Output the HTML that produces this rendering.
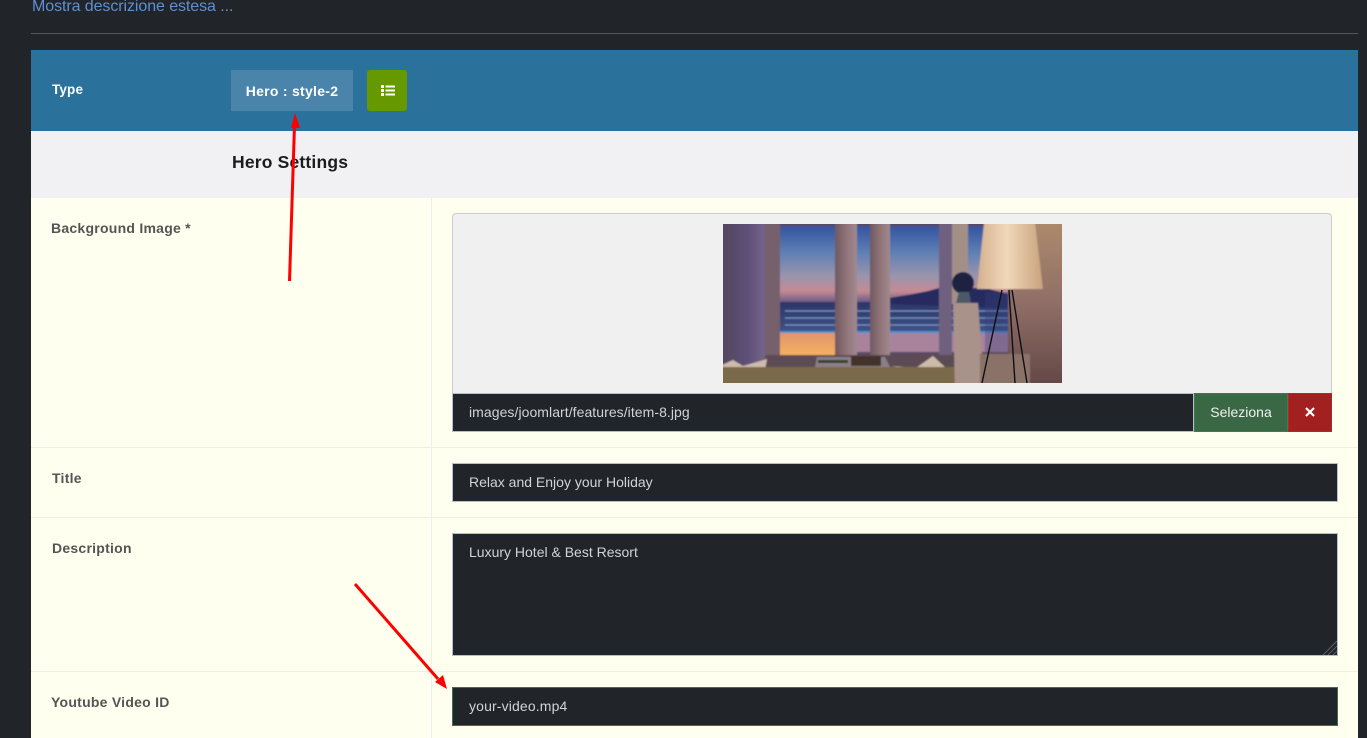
<!DOCTYPE html>
<html lang="it">
<head>
<meta charset="utf-8">
<title>Hero Settings</title>
<style>
html,body{margin:0;padding:0;width:1367px;height:738px;overflow:hidden;background:#212529;font-family:"Liberation Sans",sans-serif;font-size:14px}
.a{position:absolute;box-sizing:border-box;white-space:nowrap}
.lbl{font-weight:bold;color:#555;font-size:14px;line-height:20px;letter-spacing:.25px}
.inp{background:#212529;border:1px solid #b4bfd0;color:#ced4da;padding-left:16px;line-height:36px;font-size:14px}
</style>
</head>
<body>
<div class="a" style="left:32px;top:-3px;color:#5f8fd2;font-size:16px;line-height:20px;letter-spacing:-.08px">Mostra descrizione estesa ...</div>
<div class="a" style="left:31px;top:33px;width:1327px;height:1px;background:#54575b"></div>

<div class="a" style="left:31px;top:50px;width:1327px;height:81px;background:#2a729b"></div>
<div class="a" style="left:52px;top:80px;color:#fff;font-weight:bold;font-size:13.500px;line-height:20px;letter-spacing:.15px">Type</div>
<div class="a" style="left:231px;top:70px;width:122px;height:41px;background:#4a84ab;color:#fff;font-weight:bold;font-size:14px;line-height:43px;text-align:center;letter-spacing:.28px">Hero : style-2</div>
<div class="a" style="left:367px;top:70px;width:40px;height:41px;background:#669900;border-radius:3px"></div>
<svg class="a" style="left:381px;top:85px" width="15" height="11" viewBox="0 0 15 11"><g fill="#fff"><rect x="0" y="0" width="3" height="3"/><rect x="0" y="4" width="3" height="3"/><rect x="0" y="8" width="3" height="3"/><rect x="4.500" y=".5" width="9.500" height="2"/><rect x="4.500" y="4.500" width="9.500" height="2"/><rect x="4.500" y="8.500" width="9.500" height="2"/></g></svg>

<div class="a" style="left:31px;top:131px;width:1327px;height:67px;background:#f1f1f3"></div>
<div class="a" style="left:232px;top:151px;color:#1c1c1c;font-weight:bold;font-size:17.500px;line-height:22px;letter-spacing:.18px">Hero Settings</div>

<div class="a" style="left:31px;top:198px;width:1327px;height:540px;background:#fffff0"></div>
<div class="a" style="left:431px;top:198px;width:1px;height:540px;background:#efefe9"></div>
<div class="a" style="left:31px;top:447px;width:1327px;height:1px;background:#efefe9"></div>
<div class="a" style="left:31px;top:517px;width:1327px;height:1px;background:#efefe9"></div>
<div class="a" style="left:31px;top:671px;width:1327px;height:1px;background:#efefe9"></div>

<div class="a lbl" style="left:51px;top:218px">Background Image *</div>
<div class="a lbl" style="left:52px;top:468px">Title</div>
<div class="a lbl" style="left:52px;top:538px">Description</div>
<div class="a lbl" style="left:51px;top:692px">Youtube Video ID</div>

<div class="a" style="left:452px;top:213px;width:880px;height:181px;background:#f0f0f0;border:1px solid #ccc;border-bottom:0;border-radius:4px 4px 0 0"></div>

<svg class="a" style="left:723px;top:224px" width="339" height="159" viewBox="0 0 339 159">
<defs>
<filter id="soft" filterUnits="userSpaceOnUse" x="-10" y="-10" width="359" height="179"><feGaussianBlur stdDeviation=".7"/></filter>
<clipPath id="c"><rect width="339" height="159"/></clipPath>
<linearGradient id="sky" x1="0" y1="0" x2="0" y2="1"><stop offset="0" stop-color="#33549f"/><stop offset=".35" stop-color="#5f7fb4"/><stop offset=".66" stop-color="#9a94ac"/><stop offset=".86" stop-color="#c58a92"/><stop offset="1" stop-color="#6a5a88"/></linearGradient>
<linearGradient id="sea" x1="0" y1="0" x2="0" y2="1"><stop offset="0" stop-color="#2c3468"/><stop offset="1" stop-color="#3f5488"/></linearGradient>
<linearGradient id="wall" x1="0" y1="0" x2="1" y2="0"><stop offset="0" stop-color="#4f4158"/><stop offset=".7" stop-color="#5f5178"/><stop offset="1" stop-color="#75648a"/></linearGradient>
<linearGradient id="wallr" x1="0" y1="0" x2="0" y2="1"><stop offset="0" stop-color="#b08c6c"/><stop offset=".5" stop-color="#8f6e66"/><stop offset="1" stop-color="#5f4444"/></linearGradient>
<linearGradient id="shade" x1="0" y1="0" x2="1" y2="0"><stop offset="0" stop-color="#d4b08e"/><stop offset=".45" stop-color="#f0d8b8"/><stop offset="1" stop-color="#c9a27e"/></linearGradient>
<linearGradient id="glow" x1="0" y1="0" x2="0" y2="1"><stop offset="0" stop-color="#e0946c"/><stop offset="1" stop-color="#f6b060"/></linearGradient>
<linearGradient id="mul" x1="0" y1="0" x2="1" y2="0"><stop offset="0" stop-color="#6f5860"/><stop offset=".5" stop-color="#8f7378"/><stop offset="1" stop-color="#a08a8e"/></linearGradient>
</defs>
<g clip-path="url(#c)"><g filter="url(#soft)">
<rect x="-10" y="-10" width="359" height="179" fill="#5a4a62"/>
<rect x="-10" y="-10" width="52" height="155" fill="url(#wall)"/>
<rect x="42" y="-10" width="15" height="155" fill="#75606c"/>
<rect x="57" y="2" width="230" height="76" fill="url(#sky)"/>
<rect x="57" y="78" width="230" height="31" fill="url(#sea)"/>
<path d="M166 74 L190 70 L205 67 L216 64 L262 64 L285 70 L285 84 L166 80Z" fill="#252c5e"/>
<g stroke="#7f9fc8" stroke-width="1" fill="none"><path d="M62 87H285M62 94H285M62 101H285"/></g>
<path d="M57 108H285" stroke="#4d8fd0" stroke-width="2"/>
<rect x="57" y="109" width="55" height="22" fill="url(#glow)"/>
<rect x="112" y="109" width="175" height="19" fill="#a9829c"/>
<rect x="112" y="-10" width="22" height="142" fill="url(#mul)"/>
<rect x="147" y="-10" width="20" height="142" fill="url(#mul)"/>
<rect x="216" y="-10" width="13" height="150" fill="#6f617f"/>
<rect x="229" y="-10" width="16" height="90" fill="#a48f88"/>
<rect x="285" y="-10" width="64" height="179" fill="url(#wallr)"/>
<rect x="262" y="68" width="24" height="60" fill="#33407a" opacity=".35"/>
<rect x="42" y="131" width="200" height="14" fill="#5c4c55"/>
<path d="M94 133H162L167 143H92Z" fill="#8d7f8a"/>
<rect x="95" y="136" width="30" height="3" fill="#2d4028"/>
<rect x="128" y="132" width="30" height="10" fill="#43302a"/>
<path d="M-10 145 L10 136 L20 142 L44 135 L42 146Z M168 142 L190 146 L210 132 L225 146 Z" fill="#cdbcaa"/>
<rect x="-10" y="143" width="255" height="26" fill="#7a6a4a"/>
<path d="M230 79H255L262 169H232Z" fill="#a89289"/>
<rect x="257" y="130" width="50" height="39" fill="#8a7268"/>
<circle cx="240" cy="59" r="11" fill="#1e2440"/>
<path d="M233 79 L236 68 H246 L248 79Z" fill="#4d5868"/>
<path d="M262 -10H311L320 65H254Z" fill="url(#shade)"/>
</g>
<g stroke="#0f0f12" stroke-width="1.400" fill="none"><path d="M279 66L259 159M286 66L292 159M289 66L304 159"/></g></g>
</svg>

<div class="a inp" style="left:452px;top:393px;width:742px;height:39px;line-height:37px;letter-spacing:.06px">images/joomlart/features/item-8.jpg</div>
<div class="a" style="left:1194px;top:393px;width:94px;height:39px;background:#3a6845;border:1px solid #417a4e;color:#f0f0f0;text-align:center;line-height:37px">Seleziona</div>
<div class="a" style="left:1288px;top:393px;width:44px;height:39px;background:#a32020;border:1px solid #b02a2a"></div>
<svg class="a" style="left:1305px;top:407px" width="10" height="10" viewBox="0 0 10 10"><path d="M1 1L9 9M9 1L1 9" stroke="#fff" stroke-width="2.200" fill="none"/></svg>

<div class="a inp" style="left:452px;top:463px;width:886px;height:39px">Relax and Enjoy your Holiday</div>
<div class="a inp" style="left:452px;top:533px;width:886px;height:123px">Luxury Hotel &amp; Best Resort</div>
<svg class="a" style="left:1321px;top:640px" width="16" height="15" viewBox="0 0 16 15"><path d="M2 15L16 1M7 15L16 6M12 15L16 11" stroke="#5a5d62" stroke-width="1" fill="none"/></svg>
<div class="a inp" style="left:452px;top:687px;width:886px;height:39px;border-color:#3f6f4b;letter-spacing:.14px">your-video.mp4</div>

<svg class="a" style="left:0;top:0;pointer-events:none" width="1367" height="738" viewBox="0 0 1367 738">
<path d="M289.500 281L294.500 125" stroke="#f00" stroke-width="3" fill="none"/>
<path d="M295 113L300 128H291Z" fill="#f00"/>
<path d="M355 584L438 679" stroke="#f00" stroke-width="3" fill="none"/>
<path d="M447 689L435 682L443 675Z" fill="#f00"/>
</svg>
</body>
</html>
